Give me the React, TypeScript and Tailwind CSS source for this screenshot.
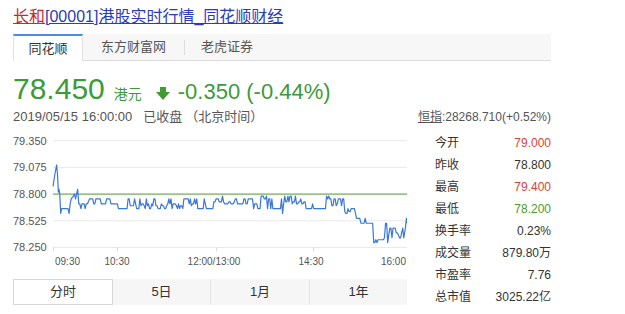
import React from "react";

function makeRng(seed: number) {
  let s = seed >>> 0;
  return () => {
    s = (s * 1664525 + 1013904223) >>> 0;
    return s / 4294967296;
  };
}

function buildSeries(): [number, number][] {
  const pts: [number, number][] = [];
  const fixed = (arr: [number, number][]) => arr.forEach((p) => pts.push(p));
  const osc = (from: number, to: number, levels: number[], seed: number, hold = 0.45) => {
    const r = makeRng(seed);
    let cur = levels[Math.floor(r() * levels.length)];
    for (let m = from; m < to; m++) {
      if (r() > hold) cur = levels[Math.floor(r() * levels.length)];
      pts.push([m, cur]);
    }
  };
  fixed([
    [0, 78.88], [1, 78.95], [2, 79.02], [3.4, 79.1], [4.2, 79.0], [5, 78.82], [5.6, 78.85],
    [6.3, 78.8], [7.2, 78.6], [8, 78.65], [14, 78.65], [15, 78.6], [16, 78.7], [17, 78.75],
    [19, 78.78], [20, 78.8], [21, 78.75], [22, 78.8], [23, 78.85], [24, 78.7],
  ]);
  osc(25, 33, [78.65, 78.7], 3);
  fixed([[33, 78.72], [34, 78.75]]);
  osc(35, 45, [78.75, 78.75, 78.8, 78.7], 11, 0.55);
  osc(45, 61, [78.7, 78.75], 17);
  fixed([[61, 78.65], [69, 78.65]]);
  osc(70, 145, [78.65, 78.7, 78.75, 78.68], 29, 0.3);
  fixed([[145, 78.65], [149, 78.65]]);
  osc(150, 160, [78.75, 78.78, 78.72], 41, 0.35);
  osc(160, 180, [78.7, 78.75, 78.72], 43, 0.35);
  osc(180, 214, [78.65, 78.7, 78.75, 78.78], 53, 0.3);
  fixed([[214, 78.6], [215, 78.7]]);
  osc(216, 236, [78.72, 78.75, 78.78, 78.7], 61, 0.35);
  fixed([[236, 78.65], [241, 78.65], [242, 78.7], [243, 78.65], [254, 78.65], [255, 78.78], [256, 78.75], [257, 78.78]]);
  osc(258, 272, [78.7, 78.75, 78.68], 71, 0.3);
  osc(272, 282, [78.6, 78.65, 78.62], 73, 0.35);
  fixed([[282, 78.6], [283, 78.55], [286, 78.55], [287, 78.5], [290, 78.5], [291, 78.55], [292, 78.5], [298, 78.5], [299, 78.3]]);
  osc(300, 309, [78.3, 78.3, 78.33], 83, 0.5);
  fixed([[309, 78.35], [310, 78.5], [311, 78.5], [312, 78.3]]);
  osc(313, 326, [78.35, 78.4, 78.45, 78.38], 89, 0.3);
  fixed([[326, 78.45], [327, 78.35], [328.5, 78.45], [329.5, 78.55], [330, 78.5]]);
  return pts;
}

const series = buildSeries();

function Chart() {
  const x0 = 40;
  const xPer = 354 / 330;
  const yOf = (p: number) => 64.1 - (p - 78.8) * 97.1;
  const d = series.map(([m, p], i) => `${i === 0 ? "M" : "L"}${(x0 + m * xPer).toFixed(2)},${yOf(p).toFixed(2)}`).join(" ");
  const grid = [
    { y: 10.7, label: "79.350" },
    { y: 37.4, label: "79.075" },
    { y: 64.1, label: "78.800" },
    { y: 90.8, label: "78.525" },
    { y: 117.5, label: "78.250" },
  ];
  const ticks = [40, 104, 203, 300, 394];
  return (
    <svg width="394" height="140" viewBox="0 0 394 140" className="block">
      {grid.map((g) => (
        <g key={g.label}>
          <line x1={40} x2={394} y1={g.y} y2={g.y} stroke="#e9e9e9" strokeWidth={1} />
          <text x={0} y={g.y + 3.9} fontSize={11} fill="#555" fontFamily="Liberation Sans, Arial, sans-serif">
            {g.label}
          </text>
        </g>
      ))}
      <line x1={40} x2={394} y1={64.1} y2={64.1} stroke="#5b9f3b" strokeWidth={1} />
      {ticks.map((t) => (
        <line key={t} x1={t + 0.5} x2={t + 0.5} y1={117.5} y2={121.5} stroke="#dcdcdc" strokeWidth={1} />
      ))}
      <path d={d} fill="none" stroke="#3a78d6" strokeWidth={1.2} strokeLinejoin="round" />
      <g fontSize={10} fill="#555" fontFamily="Liberation Sans, Arial, sans-serif">
        <text x={42} y={134.5}>09:30</text>
        <text x={104} y={134.5} textAnchor="middle">10:30</text>
        <text x={201} y={134.5} textAnchor="middle">12:00/13:00</text>
        <text x={298} y={134.5} textAnchor="middle">14:30</text>
        <text x={393} y={134.5} textAnchor="end">16:00</text>
      </g>
    </svg>
  );
}

const stats: { label: string; value: string; color: string }[] = [
  { label: "今开", value: "79.000", color: "text-[#d8413c]" },
  { label: "昨收", value: "78.800", color: "text-[#333333]" },
  { label: "最高", value: "79.400", color: "text-[#d8413c]" },
  { label: "最低", value: "78.200", color: "text-[#4e9a30]" },
  { label: "换手率", value: "0.23%", color: "text-[#333333]" },
  { label: "成交量", value: "879.80万", color: "text-[#333333]" },
  { label: "市盈率", value: "7.76", color: "text-[#333333]" },
  { label: "总市值", value: "3025.22亿", color: "text-[#333333]" },
];

export default function App() {
  return (
    <div className="w-[625px] h-[314px] bg-white overflow-hidden font-['Liberation_Sans','Noto_Sans_CJK_SC',sans-serif] text-[#333]">
      <div className="ml-[13px] w-[538px]">
        <div className="pt-[7px] text-[16px] leading-[20px] whitespace-nowrap">
          <a className="text-[#c8292d] underline">长和</a>
          <a className="text-[#2c3cb6] underline">[00001]港股实时行情_同花顺财经</a>
        </div>

        <div className="mt-[7px] flex h-[27px] bg-[#f7f7f7] text-[13px]">
          <div className="w-[70px] h-[27px] bg-white border-t-2 border-t-[#4a8fd8] border-x border-x-[#e3e3e3] flex items-center justify-center text-[#333]">
            同花顺
          </div>
          <div className="w-[101px] border-b border-[#dddddd] flex items-center justify-center text-[#555]">
            东方财富网
          </div>
          <div className="border-b border-[#dddddd] flex items-center">
            <span className="block w-px h-[15px] bg-[#dddddd]" />
          </div>
          <div className="w-[84px] border-b border-[#dddddd] flex items-center justify-center text-[#555]">
            老虎证券
          </div>
          <div className="flex-1 border-b border-[#dddddd]" />
        </div>

        <div className="mt-[13px] flex items-baseline h-[30px] text-[#3d9a3a]">
          <span className="text-[30px] leading-[30px]">78.450</span>
          <span className="ml-[9px] text-[14px]">港元</span>
          <svg width="14" height="13" viewBox="0 0 14 13" className="ml-[14px] self-end mb-[4px]">
            <polygon points="4,0 10,0 10,5 14,5 7,13 0,5 4,5" fill="#3f9b2f" />
          </svg>
          <span className="ml-[8px] text-[22px]">-0.350 (-0.44%)</span>
        </div>

        <div className="mt-[5px] flex justify-between items-center h-[16px] whitespace-nowrap">
          <span className="text-[13px] text-[#555]">
            2019/05/15 16:00:00
            <span className="ml-[11px]">已收盘</span>
            <span className="ml-[3px]">（北京时间）</span>
          </span>
          <span className="text-[12px] text-[#555]">
            <span className="underline">恒指</span>:28268.710(+0.52%)
          </span>
        </div>

        <div className="mt-[5px] flex">
          <div className="w-[394px]">
            <Chart />
            <div className="mt-[9px] flex h-[26px] text-[13px] text-[#333]">
              <div className="w-[100px] bg-white border border-[#d7d7d7] flex items-center justify-center">分时</div>
              <div className="w-[97px] bg-[#f6f6f6] flex items-center justify-center">5日</div>
              <div className="w-[99px] bg-[#f6f6f6] border-l border-[#e6e6e6] flex items-center justify-center">1月</div>
              <div className="flex-1 bg-[#f6f6f6] border-l border-[#e6e6e6] flex items-center justify-center">1年</div>
            </div>
          </div>
          <div className="ml-[28px] w-[116px] pt-[2px] text-[12px]">
            {stats.map((s) => (
              <div key={s.label} className="h-[22px] flex items-center justify-between whitespace-nowrap">
                <span className="text-[#333]">{s.label}</span>
                <span className={s.color}>{s.value}</span>
              </div>
            ))}
          </div>
        </div>
      </div>
    </div>
  );
}
